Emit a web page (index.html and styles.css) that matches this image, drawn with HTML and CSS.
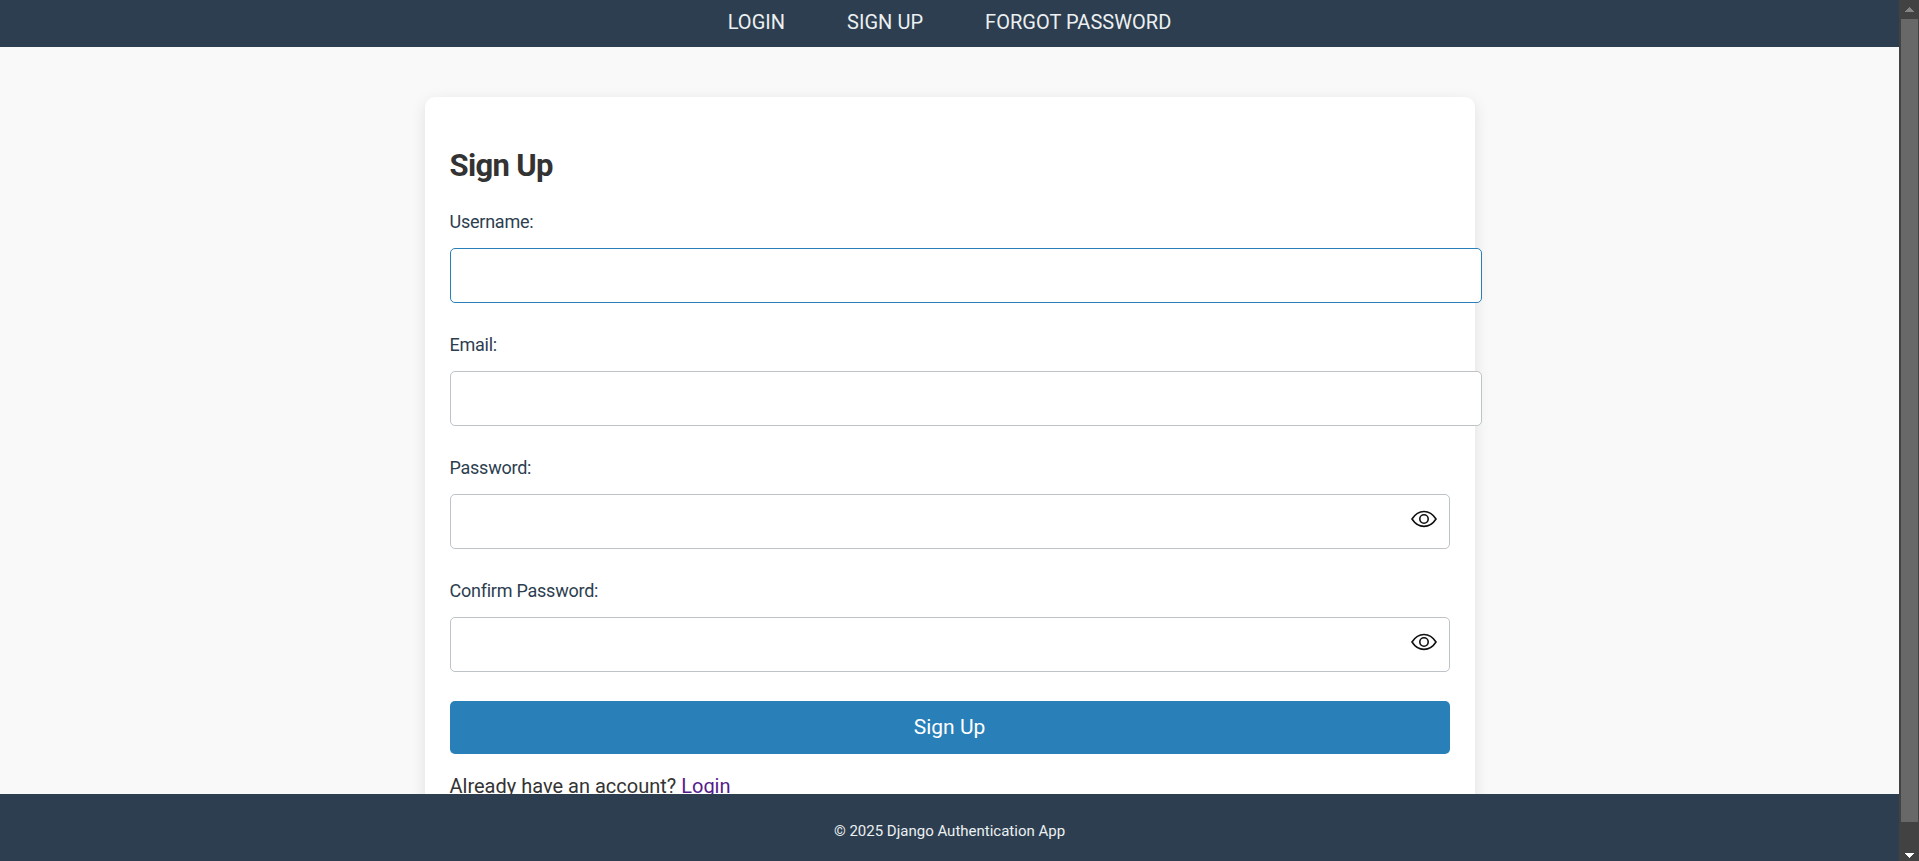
FILE: index.html
```
<!DOCTYPE html>
<html lang="en">
<head>
<meta charset="utf-8">
<title>Sign Up</title>
<link rel="stylesheet" href="styles.css">
</head>
<body>
<div class="page">
  <nav class="topbar">
    <a href="#">LOGIN</a>
    <a href="#">SIGN UP</a>
    <a href="#">FORGOT PASSWORD</a>
  </nav>
  <main class="content">
    <section class="card">
      <h2 class="title">Sign Up</h2>
      <form class="form">
        <div class="field">
          <label for="username">Username:</label>
          <input class="input wide active" id="username" type="text">
        </div>
        <div class="field">
          <label for="email">Email:</label>
          <input class="input wide" id="email" type="text">
        </div>
        <div class="field">
          <label for="password">Password:</label>
          <div class="input secret">
            <svg class="eye" viewBox="0 0 26 18"><path d="M1 9C4.2 4 8.2 1.5 13 1.5S21.8 4 25 9C21.8 14 17.800 16.400 13 16.400S4.200 14 1 9Z"/><circle cx="13" cy="9" r="4.200"/></svg>
          </div>
        </div>
        <div class="field">
          <label for="confirm">Confirm Password:</label>
          <div class="input secret">
            <svg class="eye" viewBox="0 0 26 18"><path d="M1 9C4.2 4 8.2 1.5 13 1.5S21.8 4 25 9C21.8 14 17.800 16.400 13 16.400S4.200 14 1 9Z"/><circle cx="13" cy="9" r="4.200"/></svg>
          </div>
        </div>
        <button class="submit" type="button">Sign Up</button>
      </form>
      <p class="hint">Already have an account? <a href="#">Login</a></p>
    </section>
  </main>
  <footer class="footer">© 2025 Django Authentication App</footer>
</div>
<div class="scrollbar">
  <svg class="arrow dim" viewBox="0 0 9 5"><path d="M4 0h1v1h1v1h1v1h1v1h1v1H0V4h1V3h1V2h1V1h1z"/></svg>
  <div class="thumb"></div>
  <svg class="arrow" viewBox="0 0 9 5"><path d="M0 0h9v1H8v1H7v1H6v1H5v1H4V4H3V3H2V2H1V1H0z"/></svg>
</div>
</body>
</html>
```
FILE: styles.css
```
* { box-sizing: border-box; }
body {
  margin: 0;
  height: 861px;
  display: flex;
  overflow: hidden;
  font-family: Roboto, sans-serif;
  font-size: 20px;
  color: #333;
  background: #f9f9f9;
}
.page {
  width: 1899px;
  height: 861px;
  display: flex;
  flex-direction: column;
}
.topbar {
  flex: none;
  height: 47px;
  display: flex;
  justify-content: center;
  gap: 62px;
  padding-top: 10px;
  background: #2c3e50;
  line-height: 24px;
  letter-spacing: .03px;
}
.topbar a { color: #ecf0f1; text-decoration: none; }
.content {
  flex: 1;
  min-height: 0;
  overflow: hidden;
  display: flex;
  justify-content: center;
  align-items: flex-start;
  padding-top: 50px;
}
.card {
  width: 1050px;
  height: 760px;
  padding: 49px 25px 25px;
  background: #fff;
  border-radius: 10px;
  box-shadow: 0 4px 15px rgba(0, 0, 0, .1);
}
.title {
  margin: 0;
  font-size: 31px;
  font-weight: 700;
  line-height: 40px;
  letter-spacing: -.65px;
}
.form { display: flex; flex-direction: column; padding-top: 21px; }
.field { height: 123px; }
.field label {
  display: block;
  height: 41px;
  line-height: 30px;
  font-size: 18px;
  letter-spacing: -.24px;
  color: #2c3e50;
}
.input {
  display: block;
  width: 1000px;
  height: 55px;
  border: 1px solid #bdc3c7;
  border-radius: 5px;
  background: #fff;
  outline: none;
}
.wide { width: 1032px; }
.active { border-color: #2980b9; }
.secret {
  display: flex;
  justify-content: flex-end;
  align-items: flex-start;
  padding: 15px 11.5px 0 0;
}
.eye {
  width: 26px;
  height: 18px;
  fill: none;
  stroke: #111;
  stroke-width: 1.6;
}
.submit {
  height: 53px;
  margin-top: 2px;
  padding: 0;
  border: 0;
  border-radius: 5px;
  background: #2980b9;
  color: #fff;
  font: 21px/53px Roboto, sans-serif;
}
.hint { margin: 17px 0 0; line-height: 30px; }
.hint a { color: #551a8b; }
.footer {
  flex: none;
  height: 67px;
  padding-top: 1px;
  background: #2c3e50;
  color: #ecf0f1;
  font-size: 15px;
  line-height: 72px;
  text-align: center;
}
.scrollbar {
  width: 20px;
  height: 861px;
  display: flex;
  flex-direction: column;
  align-items: center;
  padding: 7px 0 3px;
  background: #424242;
}
.thumb { width: 17px; height: 803px; margin: 7px 0 auto 1px; background: #686868; }
.arrow { flex: none; width: 9px; height: 5px; margin-left: 1px; fill: #fff; }
.dim { fill: #858585; }
```
